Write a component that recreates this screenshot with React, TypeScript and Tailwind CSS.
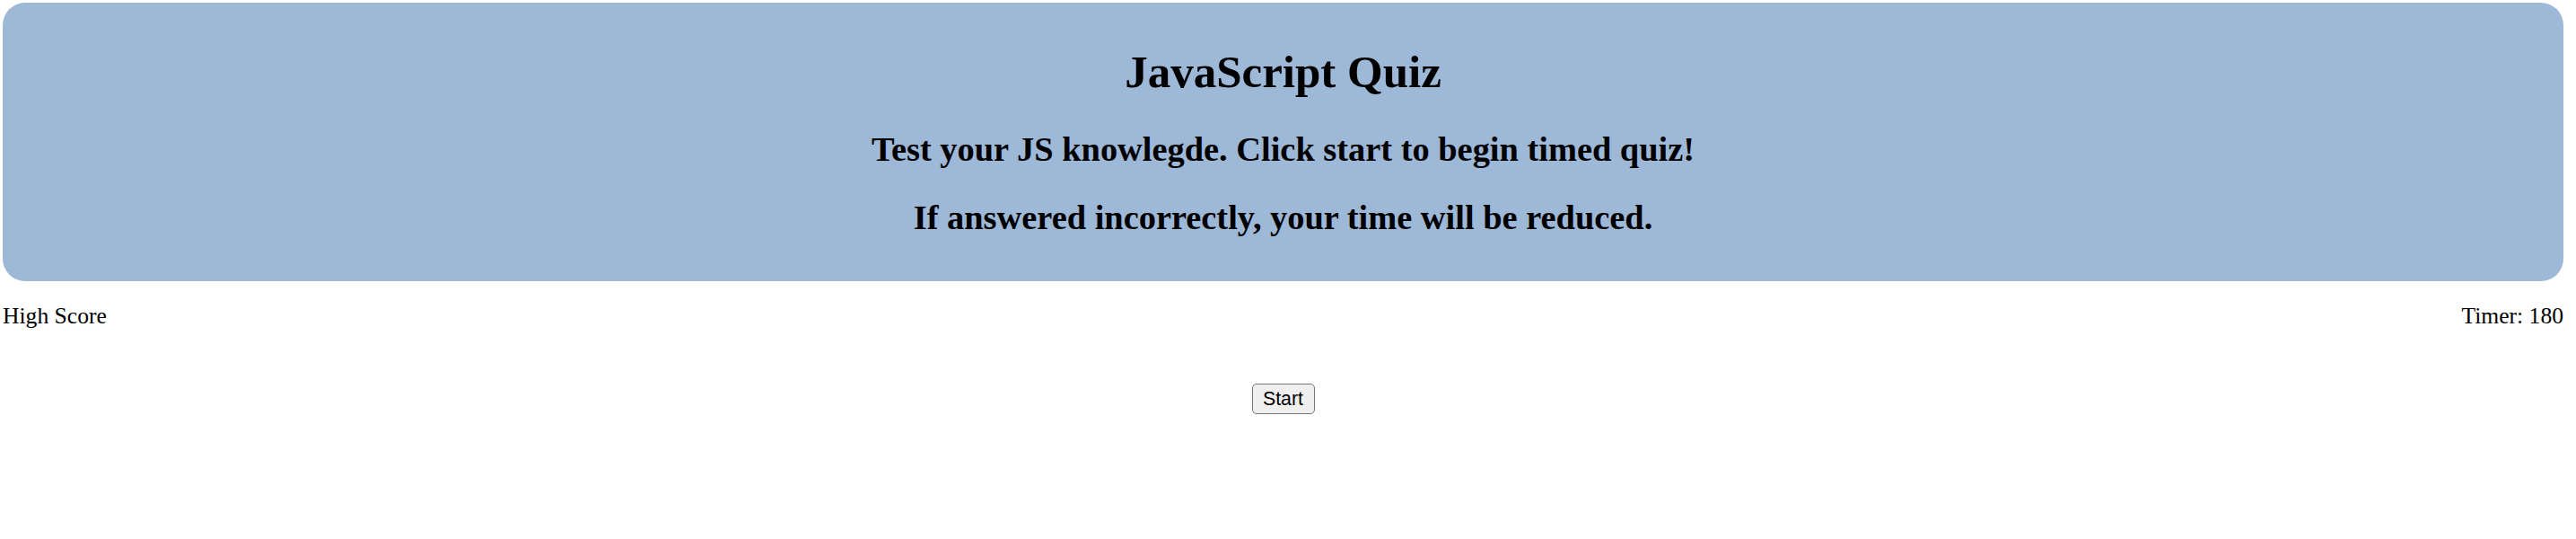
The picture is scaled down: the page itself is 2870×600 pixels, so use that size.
import React, { useState } from 'react'

export default function App() {
  const [timer] = useState(180)

  return (
    <div className="min-h-[600px] bg-white text-black font-['Liberation_Serif','Times_New_Roman',serif]">
      <div className="ml-[3px] mr-[14px] pt-[3px]">
        <header className="rounded-[25px] bg-[#9eb8d7] px-[15px] pt-[14px] pb-[17px] text-center">
          <h1 className="my-[34px] text-[51px] font-bold leading-[1.15]">JavaScript Quiz</h1>
          <h2 className="my-[32px] text-[38.4px] font-bold leading-[1.15]">
            Test your JS knowlegde. Click start to begin timed quiz!
          </h2>
          <h2 className="my-[32px] text-[38.4px] font-bold leading-[1.15]">
            If answered incorrectly, your time will be reduced.
          </h2>
        </header>

        <div className="mt-[24px] flex justify-between text-[25.6px] leading-[1.15]">
          <span>High Score</span>
          <span>Timer: {timer}</span>
        </div>

        <div className="mt-[61px] flex justify-center">
          <button className="h-[34px] w-[70px] rounded-[5px] border-[1.5px] border-[#767676] bg-[#efefef] font-['Liberation_Sans',Arial,sans-serif] text-[21.3px] leading-none">
            Start
          </button>
        </div>
      </div>
    </div>
  )
}
